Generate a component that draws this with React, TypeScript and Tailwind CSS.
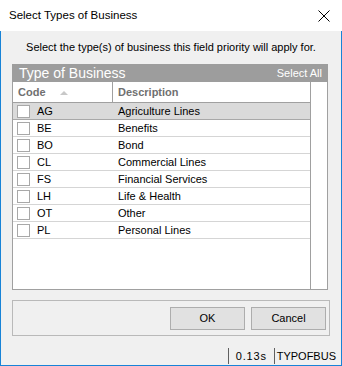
import React from "react";

const rows = [
  ["AG", "Agriculture Lines"],
  ["BE", "Benefits"],
  ["BO", "Bond"],
  ["CL", "Commercial Lines"],
  ["FS", "Financial Services"],
  ["LH", "Life & Health"],
  ["OT", "Other"],
  ["PL", "Personal Lines"],
];

export default function App() {
  return (
    <div className="w-[342px] h-[366px] bg-white text-[11px] text-black font-['Liberation_Sans',Arial,sans-serif] flex flex-col">
      <div className="h-[31px] flex items-center justify-between pl-[9px] pr-[11px] shrink-0">
        <span className="text-[11.5px] leading-none">Select Types of Business</span>
        <svg width="12" height="12" viewBox="0 0 12 12" className="mr-[1px]">
          <path d="M0.5 0.5 L11.5 11.5 M11.5 0.5 L0.5 11.5" stroke="#000" strokeWidth="1" />
        </svg>
      </div>
      <div className="flex-1 bg-[#f0f0f0] border-x border-b border-[#1883d7] flex flex-col">
        <div className="h-[33px] flex items-center justify-center pt-[9px] pb-[9px]">
          <span className="leading-none">Select the type(s) of business this field priority will apply for.</span>
        </div>
        <div className="ml-[11px] w-[316px] flex flex-col">
          <div className="h-[18px] bg-[#9d9d9d] flex items-center justify-between pl-[7px] pr-[6px] text-white">
            <span className="text-[14px] leading-none">Type of Business</span>
            <span className="text-[11px] leading-none">Select All</span>
          </div>
          <div className="h-[208px] bg-white border-x border-b border-[#a0a0a0] flex">
            <div className="w-[298px] border-r border-[#a0a0a0] flex flex-col">
              <div className="h-[21px] border-b border-[#a0a0a0] flex items-stretch">
                <div className="w-[100px] border-r border-[#a0a0a0] flex items-center pl-[5px] gap-[14px]">
                  <span className="text-[#707070] font-bold text-[11px] leading-none">Code</span>
                  <svg width="8" height="5" viewBox="0 0 8 5">
                    <path d="M0 5 L4 1 L8 5 Z" fill="#c8c8c8" />
                  </svg>
                </div>
                <div className="flex items-center pl-[5px]">
                  <span className="text-[#707070] font-bold text-[11px] leading-none">Description</span>
                </div>
              </div>
              {rows.map(([c, d], i) => (
                <div
                  key={c}
                  className={
                    i === 0
                      ? "h-[17px] bg-[#dadada] border-b border-[#a8a8a8] flex items-center"
                      : "h-[17px] border-b border-[#d5d5d5] flex items-center"
                  }
                >
                  <div className="w-[100px] flex items-center pl-[4px]">
                    <div className="w-[13px] h-[13px] border border-[#a8a8a8] bg-white" />
                    <span className="ml-[7px] leading-none">{c}</span>
                  </div>
                  <span className="pl-[5px] leading-none">{d}</span>
                </div>
              ))}
            </div>
            <div className="flex-1" />
          </div>
        </div>
        <div className="mt-[10px] ml-[11px] w-[318px] h-[36px] border border-[#b9b9b9] flex items-center justify-end gap-[6px] pr-[3px]">
          <button className="w-[75px] h-[23px] bg-[#e1e1e1] border border-[#adadad] leading-none">OK</button>
          <button className="w-[75px] h-[23px] bg-[#e1e1e1] border border-[#adadad] leading-none">Cancel</button>
        </div>
        <div className="flex-1 flex items-end justify-end pb-[1px] pr-[5px]">
          <div className="flex items-center h-[16px]">
            <div className="w-px h-[16px] bg-[#606060]" />
            <span className="pl-[7px] pr-[7px] leading-none tracking-[0.8px]">0.13s</span>
            <div className="w-px h-[16px] bg-[#606060]" />
            <span className="pl-[2px] leading-none">TYPOFBUS</span>
          </div>
        </div>
      </div>
    </div>
  );
}
